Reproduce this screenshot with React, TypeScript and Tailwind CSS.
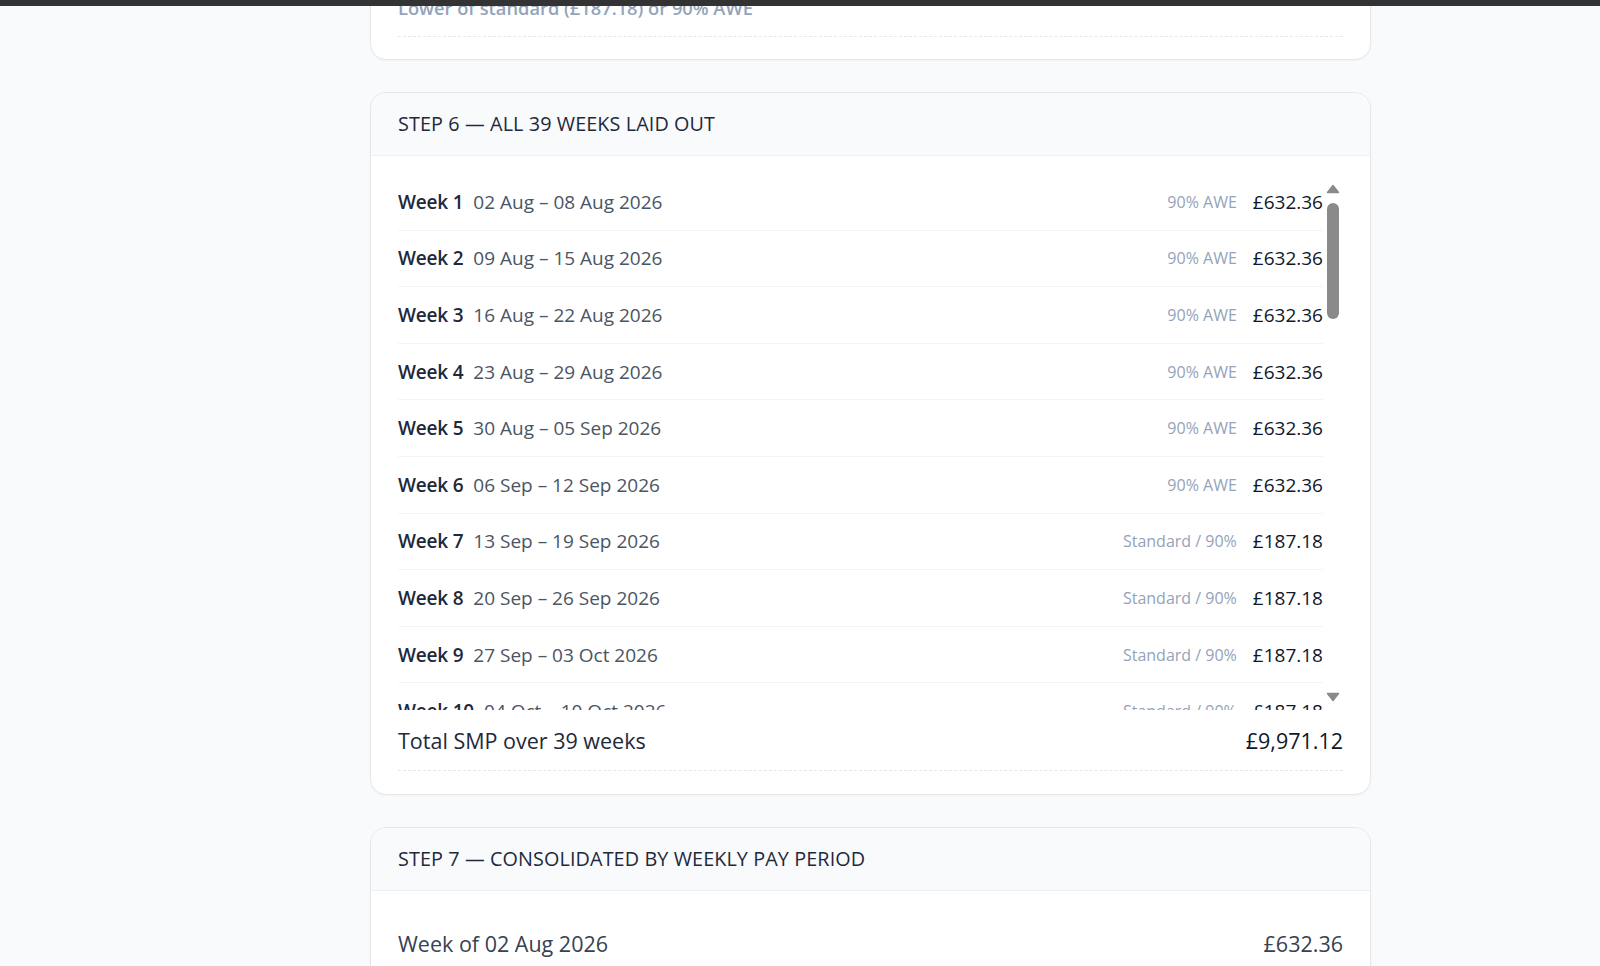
import React from "react";

const MONTHS = ["Jan", "Feb", "Mar", "Apr", "May", "Jun", "Jul", "Aug", "Sep", "Oct", "Nov", "Dec"];

function fmt(d: Date) {
  return `${String(d.getUTCDate()).padStart(2, "0")} ${MONTHS[d.getUTCMonth()]}`;
}

const weeks = Array.from({ length: 39 }, (_, i) => {
  const start = new Date(Date.UTC(2026, 7, 2 + 7 * i));
  const end = new Date(Date.UTC(2026, 7, 8 + 7 * i));
  const high = i < 6;
  return {
    n: i + 1,
    range: `${fmt(start)} – ${fmt(end)} ${end.getUTCFullYear()}`,
    basis: high ? "90% AWE" : "Standard / 90%",
    amount: high ? "£632.36" : "£187.18",
  };
});

function Triangle({ down }: { down?: boolean }) {
  return (
    <svg width="14" height="10" viewBox="0 0 14 10" className="shrink-0">
      <path
        d={down ? "M1.5 1.5 H12.5 L7 8.5 Z" : "M7 1.5 L12.5 8.5 H1.5 Z"}
        fill="#8a8a8a"
        stroke="#8a8a8a"
        strokeWidth="1.5"
        strokeLinejoin="round"
      />
    </svg>
  );
}

function CardHeader({ title }: { title: string }) {
  return (
    <div className="bg-[#f9fafb] border-b border-[#eef0f3] px-[27px] py-[17px]">
      <p className="text-[19.8px] leading-[28px] uppercase text-[#1e293b] tracking-[0.1px]">{title}</p>
    </div>
  );
}

export default function App() {
  return (
    <div className="min-h-screen bg-[#f8fafc] font-['Open_Sans',sans-serif] overflow-hidden">
      <div className="fixed top-0 inset-x-0 h-[6px] bg-[#333333] z-10" />

      <div className="ml-[370px] w-[1001px] flex flex-col gap-8 pb-10">
        {/* step 5 tail */}
        <div className="-mt-[40px] rounded-2xl border border-[#e5e7eb] bg-white shadow-[0_1px_2px_rgba(15,23,42,0.03)]">
          <div className="px-[27px] pt-[33px] pb-[22px]">
            <div className="border-b border-dashed border-[#e2e8f0] pb-[14px]">
              <p className="text-[18.3px] leading-[28px] font-semibold text-[#94a3b8]">
                Lower of standard (£187.18) or 90% AWE
              </p>
            </div>
          </div>
        </div>

        {/* step 6 */}
        <div className="rounded-2xl border border-[#e5e7eb] bg-white overflow-hidden shadow-[0_1px_2px_rgba(15,23,42,0.03)]">
          <CardHeader title="Step 6 — All 39 weeks laid out" />
          <div className="px-[27px] pt-[18px] pb-[23px]">
            <div className="flex h-[536px]">
              <div className="flex-1 overflow-hidden">
                {weeks.map((w) => (
                  <div
                    key={w.n}
                    className="flex items-center justify-between border-b border-[#f1f5f9] py-[13.8px]"
                  >
                    <div className="flex items-baseline gap-[10px] text-[19px] leading-[28px]">
                      <span className="font-semibold tracking-[-0.2px] text-[#1e293b]">Week {w.n}</span>
                      <span className="text-[#4b5563]">{w.range}</span>
                    </div>
                    <div className="flex items-center gap-4">
                      <span className="text-[16px] leading-[24px] text-[#94a3b8]">{w.basis}</span>
                      <span className="text-[19px] leading-[28px] text-[#0f172a]">{w.amount}</span>
                    </div>
                  </div>
                ))}
              </div>
              <div className="w-[20px] flex flex-col items-center pt-[10px] pb-[8px]">
                <Triangle />
                <div className="mt-[9px] h-[116px] w-[12px] rounded-full bg-[#8a8a8a]" />
                <div className="flex-1" />
                <Triangle down />
              </div>
            </div>
            <div className="flex items-center justify-between border-b border-dashed border-[#e2e8f0] pt-[15px] pb-[13px]">
              <span className="text-[21.5px] leading-[32px] font-medium text-[#1e293b]">Total SMP over 39 weeks</span>
              <span className="text-[21.5px] leading-[32px] text-[#0f172a]">£9,971.12</span>
            </div>
          </div>
        </div>

        {/* step 7 */}
        <div className="rounded-2xl border border-[#e5e7eb] bg-white overflow-hidden shadow-[0_1px_2px_rgba(15,23,42,0.03)]">
          <CardHeader title="Step 7 — Consolidated by weekly pay period" />
          <div className="px-[27px] pt-[20px] pb-[22px]">
            <div className="flex items-center justify-between border-b border-dashed border-[#e2e8f0] py-[17px]">
              <span className="text-[21.5px] leading-[32px] text-[#374151]">Week of 02 Aug 2026</span>
              <span className="text-[21.5px] leading-[32px] text-[#374151]">£632.36</span>
            </div>
          </div>
        </div>
      </div>
    </div>
  );
}
